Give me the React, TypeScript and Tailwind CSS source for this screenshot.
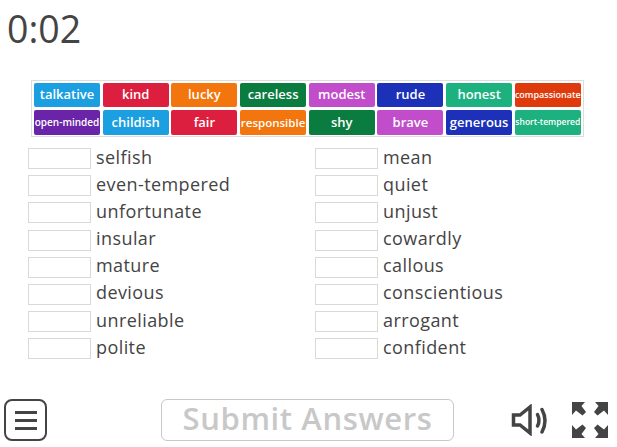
const tiles = [
  { label: "talkative", bg: "bg-[#1b9fe0]", size: "text-[13px]" },
  { label: "kind", bg: "bg-[#dc1f3f]", size: "text-[13px]" },
  { label: "lucky", bg: "bg-[#f2760d]", size: "text-[13px]" },
  { label: "careless", bg: "bg-[#0b7c3f]", size: "text-[13px]" },
  { label: "modest", bg: "bg-[#c24dcb]", size: "text-[13px]" },
  { label: "rude", bg: "bg-[#1c30b8]", size: "text-[13px]" },
  { label: "honest", bg: "bg-[#1cb17f]", size: "text-[13px]" },
  { label: "compassionate", bg: "bg-[#de3a0c]", size: "text-[9px]" },
  { label: "open-minded", bg: "bg-[#6a24a8]", size: "text-[10px]" },
  { label: "childish", bg: "bg-[#1b9fe0]", size: "text-[13px]" },
  { label: "fair", bg: "bg-[#dc1f3f]", size: "text-[13px]" },
  { label: "responsible", bg: "bg-[#f2760d]", size: "text-[11.5px]" },
  { label: "shy", bg: "bg-[#0b7c3f]", size: "text-[13px]" },
  { label: "brave", bg: "bg-[#c24dcb]", size: "text-[13px]" },
  { label: "generous", bg: "bg-[#1c30b8]", size: "text-[13px]" },
  { label: "short-tempered", bg: "bg-[#1cb17f]", size: "text-[8.5px]" },
];

const leftWords = ["selfish", "even-tempered", "unfortunate", "insular", "mature", "devious", "unreliable", "polite"];
const rightWords = ["mean", "quiet", "unjust", "cowardly", "callous", "conscientious", "arrogant", "confident"];

function WordColumn({ words }: { words: string[] }) {
  return (
    <div className="flex flex-col gap-[6.2px]">
      {words.map((word) => (
        <div key={word} className="flex h-[21px] items-center gap-[5px]">
          <div className="h-[21px] w-[63px] border border-[#d9d9d9] bg-white" />
          <span className="-translate-y-[2px] text-[18px] leading-none tracking-[0.42px] text-[#444]">{word}</span>
        </div>
      ))}
    </div>
  );
}

export default function App() {
  return (
    <div className="flex h-[447px] w-[617px] flex-col overflow-hidden bg-white font-['Open_Sans',sans-serif]">
      <div className="pl-[7px] pt-[6px] text-[37.5px] leading-[46px] font-medium text-[#444]">0:02</div>

      <div className="ml-[31px] mt-[28px] grid h-[57px] w-[553px] grid-cols-[repeat(8,66px)] grid-rows-[24px_25px] gap-x-[2.7px] gap-y-[3px] border border-[#ddd] pl-[2px] pt-[2px]">
        {tiles.map((tile) => (
          <div
            key={tile.label}
            className={`flex items-center justify-center rounded-[2px] font-semibold whitespace-nowrap text-white ${tile.bg} ${tile.size}`}
          >
            {tile.label}
          </div>
        ))}
      </div>

      <div className="ml-[28px] mt-[11px] grid grid-cols-[287px_1fr]">
        <WordColumn words={leftWords} />
        <WordColumn words={rightWords} />
      </div>

      <div className="mt-auto flex h-[56px] items-center pb-[1px] pl-[4px] pt-[3px]">
        <div className="flex h-[42px] w-[43px] flex-col items-center justify-center gap-[5px] rounded-[8px] border-[2.5px] border-[#444]">
          <span className="h-[3px] w-[22px] bg-[#444]" />
          <span className="h-[3px] w-[22px] bg-[#444]" />
          <span className="h-[3px] w-[22px] bg-[#444]" />
        </div>
        <div className="ml-[114px] flex h-[42px] w-[293px] items-center justify-center rounded-[6px] border border-[#c8c8c8] pb-[4px] text-[31px] font-semibold tracking-[0.6px] text-[#c8c8c8]">
          Submit Answers
        </div>
        <svg className="ml-[57px]" width="37" height="32" viewBox="0 0 37 32" fill="none" stroke="#444" strokeWidth="3.5">
          <path d="M2.5 11 H9 L19 3 V29 L9 21 H2.5 Z" />
          <path d="M26.5 10.5 Q29.5 16.5 26.5 22" strokeLinecap="round" />
          <path d="M31 5.5 Q37 16.5 31 28" strokeLinecap="round" />
        </svg>
        <svg className="ml-[23px]" width="38" height="38" viewBox="0 0 38 38" fill="#444">
          <path d="M1 1 H14 L10.5 5 L15 11 L11.5 14.5 L5 9.5 L1 14 Z" />
          <path d="M37 1 H24 L27.5 5 L23 11 L26.5 14.5 L33 9.5 L37 14 Z" />
          <path d="M1 37 H14 L10.5 33 L15 27 L11.5 23.5 L5 28.5 L1 24 Z" />
          <path d="M37 37 H24 L27.5 33 L23 27 L26.5 23.5 L33 28.5 L37 24 Z" />
        </svg>
      </div>
    </div>
  );
}
